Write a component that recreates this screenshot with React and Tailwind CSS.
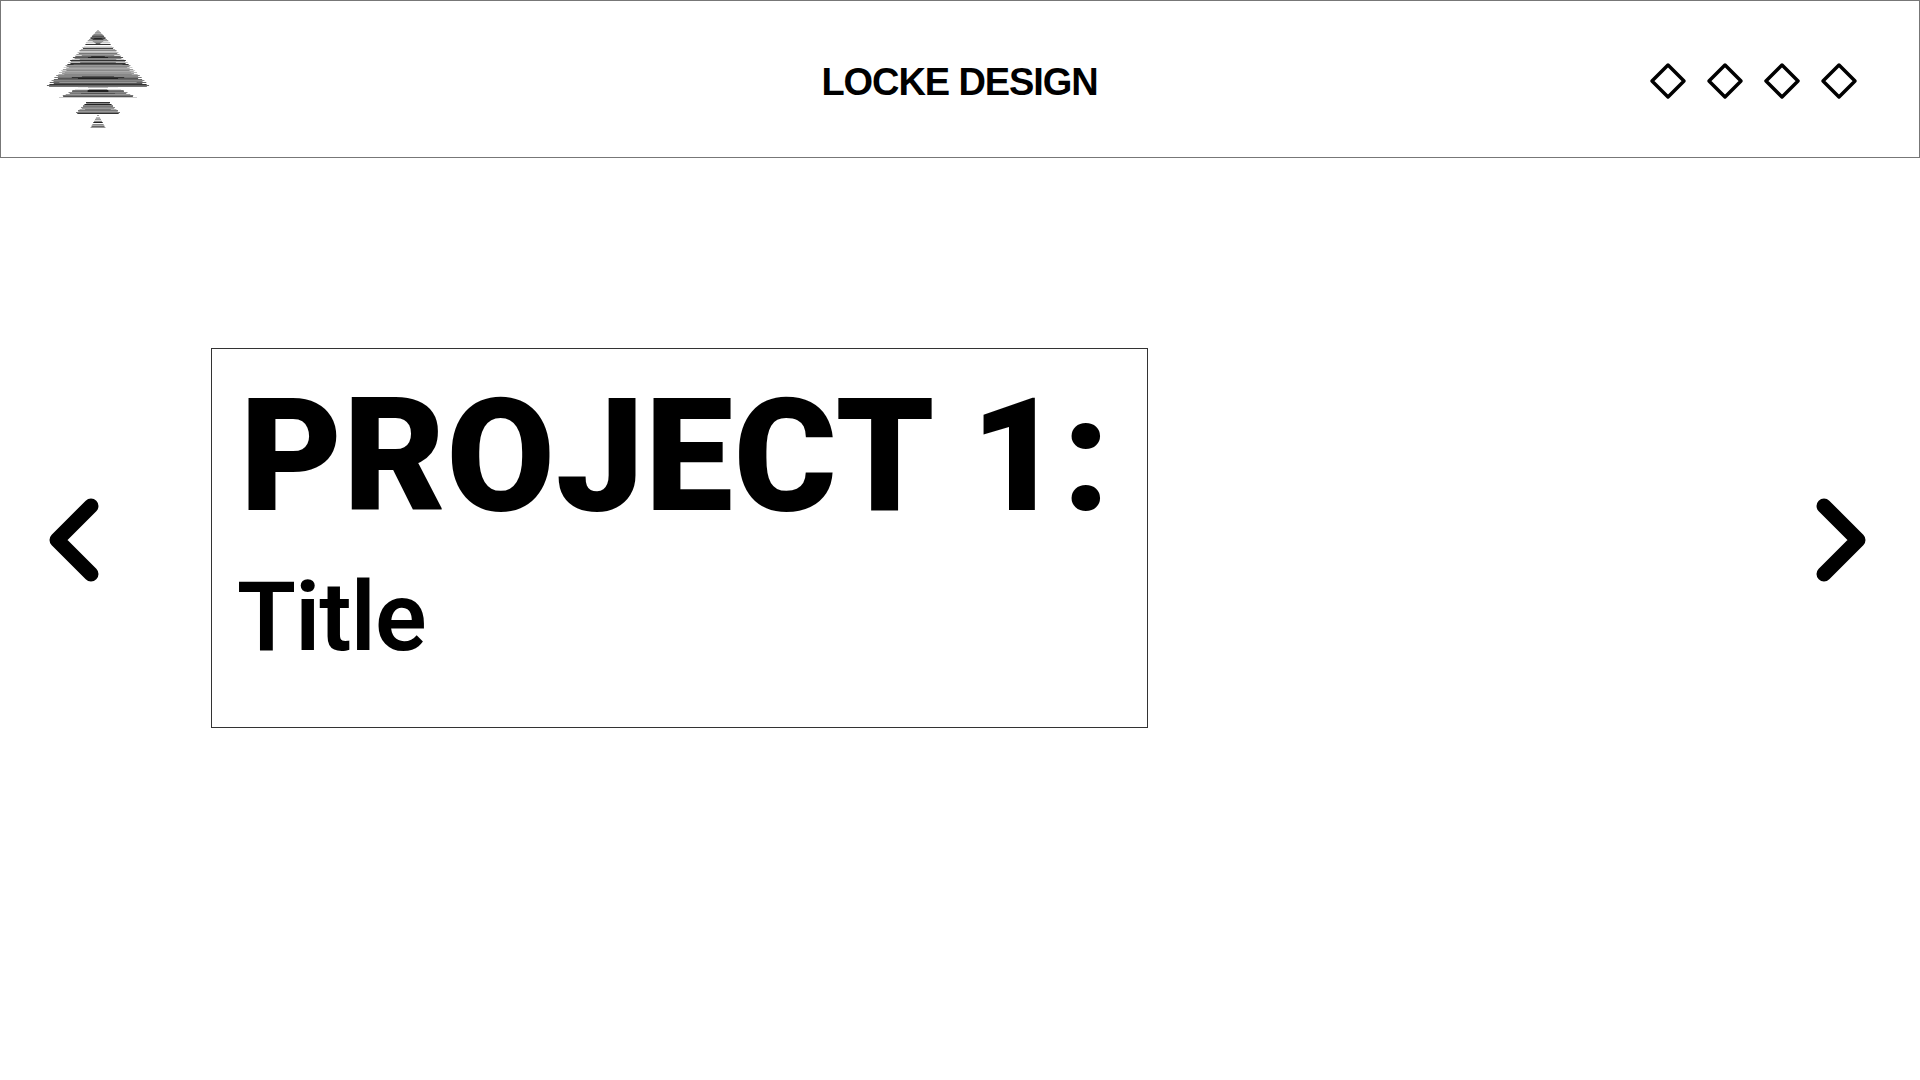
import React from 'react';

// width of the tree at a given pixel row, tier by tier
const treeEdge = (y) => {
  if (y < 14) return 1 + (y * 12) / 13;
  if (y < 57) return 13 + ((y - 14) * 39) / 42;
  if (y < 68) return 20 + ((y - 57) * 19) / 10;
  if (y < 72) return 0;
  if (y < 84) return 12 + ((y - 72) * 11) / 11;
  if (y < 87) return y === 85 ? 1 : 0;
  return 2 + ((y - 87) * 6) / 11;
};

// gray of each pixel row, with a darker middle part on some: [gray, inner width 0..1, inner gray]
const treeShades = [
  ['#bbb'], ['#aaa'], ['#999'], ['#aaa'], ['#888'], ['#777'], ['#555'], ['#666'], ['#444', 0.5, '#222'], ['#999', 0.6, '#444'],
  ['#999'], ['#ddd', 0.5, '#999'], ['#ccc', 0.3, '#888'], ['#eee', 0.2, '#666'], ['#333'], ['#fff'], ['#ddd'], ['#bbb'], ['#444'], ['#aaa'],
  ['#888'], ['#ccc'], ['#bbb'], ['#777'], ['#999'], ['#ddd', 0.7, '#888'], ['#666', 0.3, '#333'], ['#555', 0.4, '#222'], ['#888'], ['#ccc', 0.7, '#888'],
  ['#333'], ['#999'], ['#bbb', 0.6, '#777'], ['#333'], ['#333', 0.8, '#555'], ['#999'], ['#888'], ['#ccc', 0.85, '#999'], ['#aaa'], ['#999'],
  ['#ccc', 0.85, '#888'], ['#aaa'], ['#bbb', 0.85, '#999'], ['#999'], ['#aaa', 0.85, '#888'], ['#888'], ['#888', 0.4, '#555'], ['#777', 0.6, '#333'], ['#555', 0.5, '#222'], ['#666'],
  ['#888'], ['#777'], ['#666', 0.8, '#999'], ['#555'], ['#333'], ['#666'], ['#777'], ['#eee', 0.5, '#bbb'], ['#fff'], ['#ddd', 0.4, '#999'],
  ['#777', 0.4, '#222'], ['#666', 0.4, '#222'], ['#888'], ['#777', 0.6, '#555'], ['#999'], ['#777'], ['#555'], ['#ccc'], ['#fff'], ['#eee'],
  ['#ddd'], ['#fff'], ['#333'], ['#888'], ['#222'], ['#888'], ['#777'], ['#888'], ['#999'], ['#aaa', 0.7, '#777'],
  ['#777'], ['#999'], ['#777'], ['#333'], ['#fff'], ['#999'], ['#fff'], ['#bbb'], ['#aaa'], ['#999'],
  ['#ddd'], ['#888'], ['#222'], ['#fff'], ['#888'], ['#aaa'], ['#666'], ['#999'],
];

const jitter = [1, 0.94, 1, 0.9, 0.97];

const TreeLogo = () => (
  <svg width="104" height="98" viewBox="0 0 104 98" className="block">
    {treeShades.map(([gray, inner, innerGray], i) => {
      const half = treeEdge(i) * jitter[i % 5];
      return (
        <g key={i}>
          <rect x={52 - half} y={i} width={half * 2} height="1" fill={gray} />
          {inner && <rect x={52 - half * inner} y={i} width={half * 2 * inner} height="1" fill={innerGray} />}
        </g>
      );
    })}
  </svg>
);

const Diamond = () => (
  <svg width="38" height="38" viewBox="0 0 38 38" className="block">
    <path d="M19 3 L35 19 L19 35 L3 19 Z" fill="none" stroke="#000" strokeWidth="3.5" strokeLinejoin="round" />
  </svg>
);

const Chevron = ({ points }) => (
  <svg width="50" height="84" viewBox="0 0 50 84" className="block shrink-0 mt-[4px]">
    <polyline points={points} fill="none" stroke="#000" strokeWidth="15" strokeLinecap="round" strokeLinejoin="round" />
  </svg>
);

export default function App() {
  return (
    <div className="w-[1920px] h-[1080px] bg-white text-black overflow-hidden font-['Liberation_Sans',sans-serif]">
      {/* Header */}
      <header className="h-[158px] border border-[#777] grid grid-cols-[1fr_auto_1fr] items-center pl-[45px] pr-[61px]">
        <TreeLogo />
        <h1 className="ml-[15px] mt-[5px] text-[38px] leading-none font-bold tracking-[-1.1px] whitespace-nowrap">LOCKE DESIGN</h1>
        <div className="flex justify-end gap-[19px] mt-[3px]">
          <Diamond />
          <Diamond />
          <Diamond />
          <Diamond />
        </div>
      </header>

      {/* Slide */}
      <main className="flex items-center pl-[49px] pr-[54px] pt-[190px]">
        <Chevron points="42,8 8,42 42,76" />
        <section className="w-[937px] h-[380px] ml-[112px] border border-[#333] pl-[28px] pt-[21px] font-['Roboto',sans-serif]">
          <h2 className="text-[157px] leading-[1.1] font-black tracking-[0.9px] whitespace-nowrap">PROJECT 1:</h2>
          <p className="text-[96px] leading-[1.1] font-semibold tracking-[-0.8px] pt-[22px] -ml-[3px]">Title</p>
        </section>
        <div className="grow"></div>
        <Chevron points="8,8 42,42 8,76" />
      </main>
    </div>
  );
}
